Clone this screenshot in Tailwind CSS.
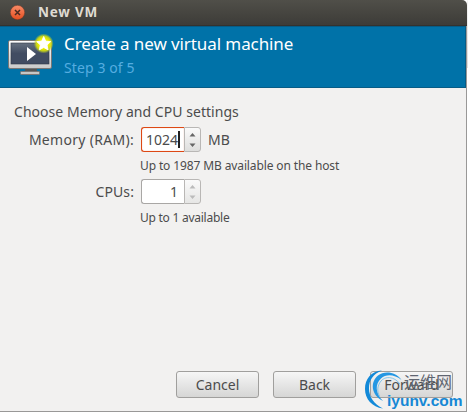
<!DOCTYPE html>
<html lang="en">

<head>
    <meta charset="UTF-8">
    <meta name="viewport" content="width=device-width, initial-scale=1.0">
    <title>New VM</title>
    <script src="https://cdn.jsdelivr.net/npm/@tailwindcss/browser@4"></script>
</head>

<body class="w-[468px] h-[416px] overflow-hidden bg-white font-['Noto_Sans','Open_Sans',sans-serif] text-[#4c4c4c] whitespace-nowrap">

    <div class="relative flex">
        <div class="w-[467px] h-[412px] flex flex-col">

            <!-- title bar -->
            <div class="h-[26px] shrink-0 flex items-center pl-[10px] gap-[13px] rounded-tr-[5px] bg-linear-to-b from-[#504f49] to-[#3d3c38] border-b border-[#33322e]">
                <svg class="size-[15px] shrink-0" viewBox="0 0 15 15">
                    <defs>
                        <linearGradient id="close" x1="0" y1="0" x2="0" y2="1">
                            <stop offset="0" stop-color="#f98c68" />
                            <stop offset="1" stop-color="#e44e20" />
                        </linearGradient>
                    </defs>
                    <circle cx="7.5" cy="7.5" r="7.2" fill="url(#close)" stroke="#6b3827" stroke-width=".5" />
                    <path d="M5 5l5 5M10 5l-5 5" stroke="#4b2a20" stroke-width="1.5" />
                </svg>
                <h1 class="-mt-px text-[13.5px] leading-[20px] font-bold text-[#dfdbd2] tracking-[0.8px]">New VM</h1>
            </div>

            <div class="grow w-[467px] flex flex-col bg-[#f2f1f0] border-r border-[#999897] border-b">

                <!-- wizard header -->
                <div class="h-[62px] shrink-0 flex bg-[#0072a8] border-y border-r border-[#075c86] pl-[6px]">
                    <svg class="w-[48px] h-[48px] mt-[5px] shrink-0" viewBox="0 0 48 48">
                        <defs>
                            <linearGradient id="screen" x1="0" y1="0" x2="0" y2="1">
                                <stop offset="0" stop-color="#66717f" />
                                <stop offset=".5" stop-color="#414c62" />
                                <stop offset="1" stop-color="#414c62" />
                            </linearGradient>
                            <linearGradient id="frame" x1="0" y1="0" x2="0" y2="1">
                                <stop offset="0" stop-color="#ffffff" />
                                <stop offset="1" stop-color="#c9c9c9" />
                            </linearGradient>
                            <radialGradient id="glow">
                                <stop offset=".5" stop-color="#f0f000" />
                                <stop offset=".75" stop-color="#d2dc10" stop-opacity=".9" />
                                <stop offset="1" stop-color="#b0c830" stop-opacity="0" />
                            </radialGradient>
                        </defs>
                        <path d="M19 36h12v4H19z" fill="#555" />
                        <rect x="14.5" y="39.5" width="19" height="3" rx=".7" fill="#c6c6c6" stroke="#777" />
                        <rect x="2.5" y="8.5" width="43" height="28" rx="1.5" fill="url(#frame)" stroke="#777" />
                        <rect x="5" y="11" width="38" height="21" fill="url(#screen)" stroke="#303848" stroke-width=".6" />
                        <path d="M21 15v14l9-7z" fill="#fff" />
                        <circle cx="37.7" cy="11.5" r="10" fill="url(#glow)" />
                        <path d="M37.7 4.5l2 4.6 5 .5-3.7 3.4 1.1 4.9-4.4-2.5-4.4 2.5 1.1-4.9-3.7-3.4 5-.5z" fill="#fff" stroke="#fff" stroke-width=".9" />
                    </svg>
                    <div class="ml-[10px] pt-[4px]">
                        <h2 class="text-[17px] leading-[26px] text-white tracking-[-0.09px]">Create a new virtual machine</h2>
                        <p class="text-[14px] leading-[22px] text-[#55ade0] tracking-[0.1px]">Step 3 of 5</p>
                    </div>
                </div>

                <!-- settings -->
                <div class="pl-[14px] pt-[13px] text-[14px]">
                    <p class="leading-[22px] tracking-[0.04px]">Choose Memory and CPU settings</p>
                    <div class="flex items-center h-[26px] mt-[3px]">
                        <label class="w-[120px] text-right tracking-[0.3px]">Memory (RAM):</label>
                        <div class="ml-[7px] w-[60px] h-[25px] flex">
                            <div class="w-[43px] h-[25px] flex items-center justify-end bg-white rounded-l-[3px] border border-r-0 border-[#dd4814] inset-shadow-[0_0_1px_#e8906f]">
                                <span>1024</span>
                                <span class="w-[2px] h-[17px] bg-[#222] mr-[4px]"></span>
                            </div>
                            <div class="w-[17px] h-[25px] rounded-r-[3px] border border-[#b9b7b5] bg-linear-to-b from-[#fafafa] to-[#dededd]">
                                <svg class="w-[15px] h-[23px]" viewBox="0 0 15 23">
                                    <path d="M4.5 8.5h6l-3-3.5zM4.5 15.5h6l-3 3.5z" fill="#666" />
                                </svg>
                            </div>
                        </div>
                        <span class="ml-[7px]">MB</span>
                    </div>
                    <p class="pl-[126px] text-[12px] leading-[18px] mt-[5px] tracking-[-0.12px]">Up to 1987 MB available on the host</p>
                    <div class="flex items-center h-[26px] mt-[3px]">
                        <label class="w-[120px] text-right tracking-[0.1px]">CPUs:</label>
                        <div class="ml-[7px] w-[60px] h-[25px] flex">
                            <div class="w-[43px] h-[25px] flex items-center justify-end pr-[6px] bg-white rounded-l-[3px] border border-r-0 border-[#a9a7a5]">1</div>
                            <div class="w-[17px] h-[25px] rounded-r-[3px] border border-[#b9b7b5] bg-linear-to-b from-[#fafafa] to-[#e6e6e5]">
                                <svg class="w-[15px] h-[23px]" viewBox="0 0 15 23">
                                    <path d="M4.5 8.5h6l-3-3.5zM4.5 15.5h6l-3 3.5z" fill="#bbb" />
                                </svg>
                            </div>
                        </div>
                    </div>
                    <p class="pl-[126px] text-[12px] leading-[18px] mt-[5px] tracking-[-0.25px]">Up to 1 available</p>
                </div>

                <!-- buttons -->
                <div class="mt-auto mb-[13px] flex justify-end gap-[14px] pr-[13px] text-[14px]">
                    <button class="w-[83px] h-[27px] rounded-[3px] border border-[#a09f9d] bg-linear-to-b from-[#f6f6f6] to-[#d6d6d5]">Cancel</button>
                    <button class="w-[83px] h-[27px] rounded-[3px] border border-[#a09f9d] bg-linear-to-b from-[#f6f6f6] to-[#d6d6d5]">Back</button>
                    <button class="w-[83px] h-[27px] rounded-[3px] border border-[#a09f9d] bg-linear-to-b from-[#f6f6f6] to-[#d6d6d5]">Forward</button>
                </div>
            </div>
        </div>

        <!-- edge of the window behind -->
        <div class="w-px h-[68px] bg-linear-to-b from-[#f5f5f5] to-[#dddddd]"></div>

        <!-- site watermark -->
        <div class="absolute left-[363px] top-[370px] w-[104px] h-[40px]">
            <svg class="absolute left-0 top-0 w-[42px] h-[40px]" viewBox="0 0 42 40">
                <path d="M19 .5C8 1 2 9 2 19 2 29 9 37 20 38.5 11 34 6 27 6 18.5 6 10 10 4 19 .5z" fill="#1289d8" />
                <path d="M38.5 10C32 1 21 1 15 5.5 7 12 8 25 20 31 12 23 12 14 18 8.5 23 4 31 4 38.5 10z" fill="#2497e3" />
                <path d="M37 14C31 6 22 6 18 11 14 16 14 22 16.5 26" fill="none" stroke="#6bbcec" stroke-width=".8" />
            </svg>
            <span class="absolute left-[41px] top-[1px] text-[16px] leading-[20px] text-[#5f6570] font-['Noto_Sans_CJK_SC',sans-serif]">运维网</span>
            <span class="absolute left-[24px] top-[22px] text-[15.5px] leading-[18px] font-bold text-[#1688d5] font-['Liberation_Sans',sans-serif]">iyunv.com</span>
        </div>
    </div>

</body>

</html>
